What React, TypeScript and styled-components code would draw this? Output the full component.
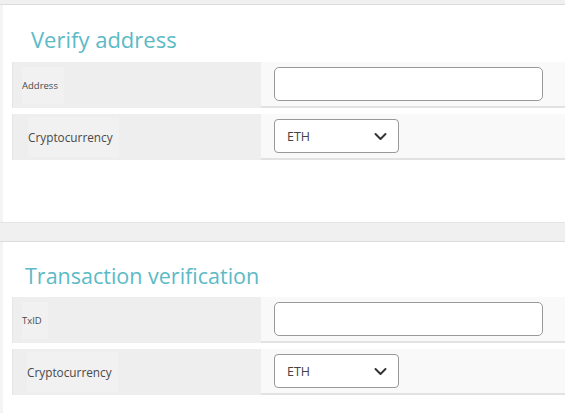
import React from "react";
import styled, { createGlobalStyle } from "styled-components";

const Global = createGlobalStyle`
  html, body { margin: 0; padding: 0; background: #f0f0f0; }
  body { font-family: "Open Sans", "Liberation Sans", sans-serif; color: #444; }
  * { box-sizing: border-box; }
`;

const Page = styled.div`
  width: 565px;
  height: 413px;
  overflow: hidden;
  background: #f0f0f0;
  display: flex;
  flex-direction: column;
`;

const TopBand = styled.div`
  height: 5px;
  background: #f0f0f0;
  border-bottom: 1px solid #dcdcdc;
`;

const Gap = styled.div`
  height: 20px;
  background: #f0f0f0;
  border-top: 1px solid #e4e4e4;
  border-bottom: 1px solid #dcdcdc;
`;

const Card = styled.section<{ $h?: number }>`
  background: #ffffff;
  padding-top: ${(p) => (p.$h ? 19 : 19)}px;
  height: ${(p) => p.$h ?? 171}px;
  flex: ${(p) => (p.$h ? "0 0 auto" : "1 1 auto")};
  border-left: 3px solid #f4f4f4;
`;

const Title = styled.h2<{ $size: number; $left: number; $mb: number }>`
  margin: 0 0 ${(p) => p.$mb}px ${(p) => p.$left}px;
  font-family: "Open Sans", sans-serif;
  font-weight: 400;
  font-size: ${(p) => p.$size}px;
  line-height: normal;
  color: #5bbac6;
`;

const Rows = styled.div`
  display: flex;
  flex-direction: column;
  gap: 6px;
`;

const Row = styled.div`
  display: grid;
  grid-template-columns: 10px 248px 1fr;
  height: 46px;
`;

const Edge = styled.div`
  border-right: 1px solid #e6e6e6;
`;

const LabelCell = styled.div<{ $pad: number }>`
  background: #eeeeee;
  display: flex;
  align-items: center;
  padding-left: ${(p) => p.$pad}px;
`;

const Label = styled.span<{ $size: number }>`
  font-size: ${(p) => p.$size}px;
  color: #4a4a4a;
  background: #f1f1f1;
  padding: 12px 6px 12px 0;
`;

const ValueCell = styled.div`
  background: #f9f9f9;
  border-bottom: 2px solid #e2e2e2;
  display: flex;
  align-items: center;
  padding-left: 13px;
`;

const TextInput = styled.input`
  width: 269px;
  height: 34px;
  border: 1px solid #999999;
  border-radius: 5px;
  background: #ffffff;
  outline: none;
`;

const SelectBox = styled.div`
  width: 125px;
  height: 34px;
  border: 1px solid #999999;
  border-radius: 4px;
  background: #ffffff;
  display: flex;
  align-items: center;
  justify-content: space-between;
  padding: 0 11px 0 12px;
  font-size: 12.5px;
  color: #444;
`;

const Chevron = () => (
  <svg width="13" height="9" viewBox="0 0 13 9" fill="none">
    <path d="M1.5 2 L6.5 7 L11.5 2" stroke="#333" strokeWidth="2" strokeLinecap="round" strokeLinejoin="round" />
  </svg>
);

const Select = ({ value }: { value: string }) => (
  <SelectBox>
    <span>{value}</span>
    <Chevron />
  </SelectBox>
);

export default function App() {
  return (
    <Page>
      <Global />
      <TopBand />
      <Card $h={217}>
        <Title $size={22} $left={28} $mb={8}>Verify address</Title>
        <Rows>
          <Row>
            <Edge />
            <LabelCell $pad={9}>
              <Label $size={9.5}>Address</Label>
            </LabelCell>
            <ValueCell>
              <TextInput />
            </ValueCell>
          </Row>
          <Row>
            <Edge />
            <LabelCell $pad={15}>
              <Label $size={11.8}>Cryptocurrency</Label>
            </LabelCell>
            <ValueCell>
              <Select value="ETH" />
            </ValueCell>
          </Row>
        </Rows>
      </Card>
      <Gap />
      <Card>
        <Title $size={21.5} $left={22} $mb={7}>Transaction verification</Title>
        <Rows>
          <Row>
            <Edge />
            <LabelCell $pad={9}>
              <Label $size={9.5}>TxID</Label>
            </LabelCell>
            <ValueCell>
              <TextInput />
            </ValueCell>
          </Row>
          <Row>
            <Edge />
            <LabelCell $pad={14}>
              <Label $size={11.8}>Cryptocurrency</Label>
            </LabelCell>
            <ValueCell>
              <Select value="ETH" />
            </ValueCell>
          </Row>
        </Rows>
      </Card>
    </Page>
  );
}
